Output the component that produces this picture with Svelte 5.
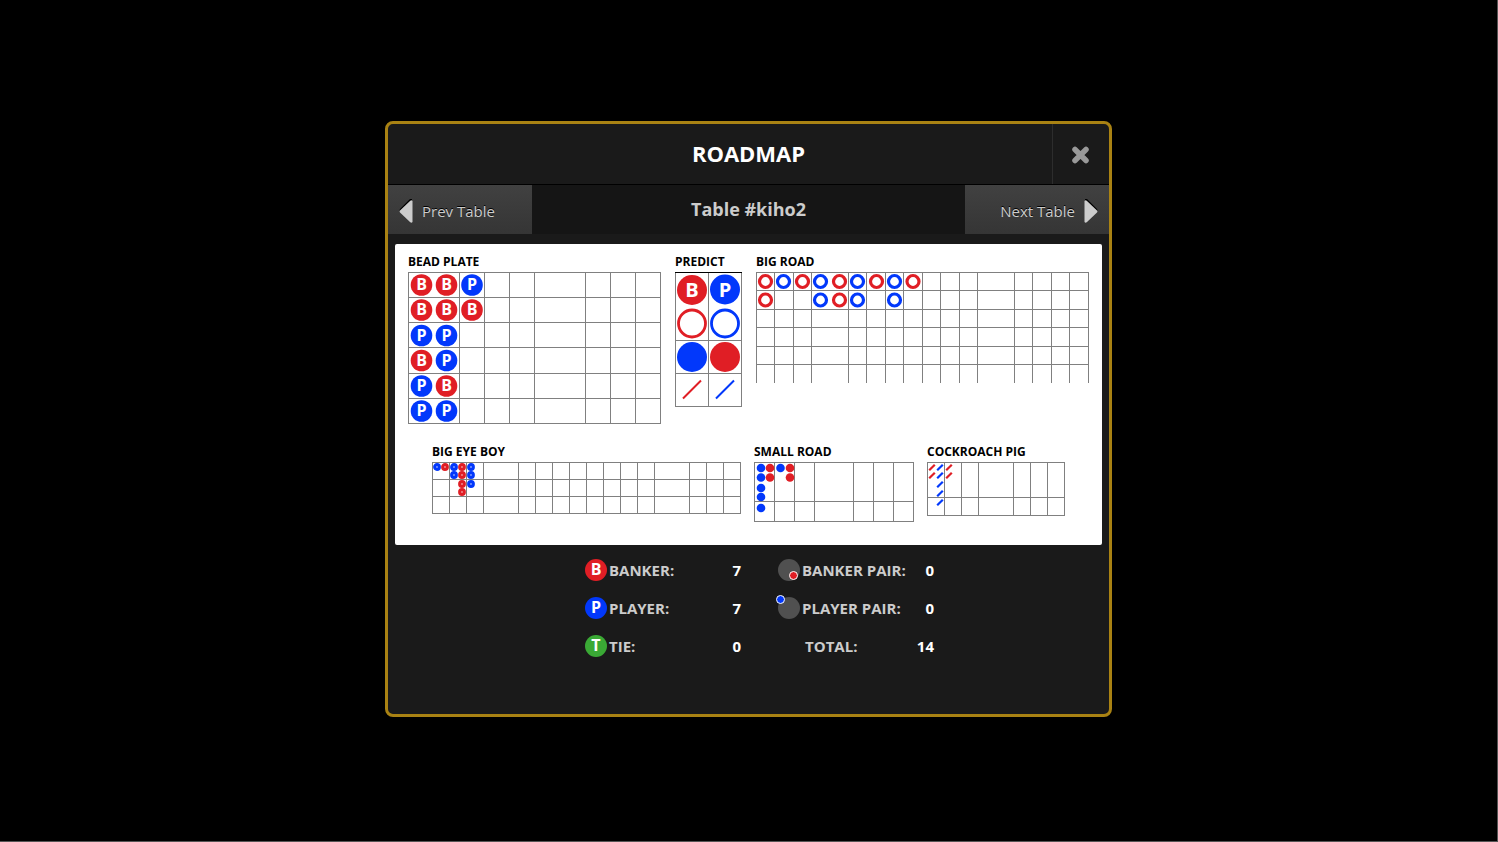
<script lang="ts">
	type Shape = 'bead' | 'ring' | 'dot' | 'slash';

	interface Mark {
		x: number;
		y: number;
		r: number;
		side: 'B' | 'P';
		shape: Shape;
		stroke?: number;
	}

	interface Road {
		name: string;
		width: number;
		height: number;
		cols: number[];
		rows: number[];
		marks: Mark[];
	}

	const RED = '#e01e25';
	const BLUE = '#0238fb';

	// each string is one column read downwards
	function plot(
		columns: string[],
		xs: number[],
		ys: number[],
		shape: Shape,
		r: number,
		stroke = 2
	): Mark[] {
		return columns.flatMap((column, c) =>
			[...column].map((side, i) => ({ x: xs[c], y: ys[i], r, side: side as 'B' | 'P', shape, stroke }))
		);
	}

	const beadPlate: Road = {
		name: 'BEAD PLATE',
		width: 253,
		height: 152,
		cols: [0, 51, 76, 101, 126, 177, 202, 227, 252],
		rows: [0, 25, 50, 75, 101, 126, 151],
		marks: plot(['BBPBPP', 'BBPPBP', 'PB'], [13.5, 38.5, 64], [13, 38, 63.5, 88.5, 114, 139], 'bead', 10.8)
	};

	const predict: Road = {
		name: 'PREDICT',
		width: 67,
		height: 135,
		cols: [0, 33, 66],
		rows: [0, 68, 101, 134],
		marks: [
			{ x: 17, y: 18, r: 15, side: 'B', shape: 'bead' },
			{ x: 50, y: 17.5, r: 15, side: 'P', shape: 'bead' },
			{ x: 17, y: 51.5, r: 13.5, side: 'B', shape: 'ring', stroke: 2.8 },
			{ x: 50, y: 51.5, r: 13.5, side: 'P', shape: 'ring', stroke: 2.8 },
			{ x: 17, y: 85, r: 15, side: 'P', shape: 'dot' },
			{ x: 50, y: 85, r: 15, side: 'B', shape: 'dot' },
			{ x: 17, y: 117.5, r: 9, side: 'B', shape: 'slash', stroke: 2 },
			{ x: 50, y: 117.5, r: 9, side: 'P', shape: 'slash', stroke: 2 }
		]
	};

	const bigRoad: Road = {
		name: 'BIG ROAD',
		width: 333,
		height: 111,
		cols: [0, 18, 37, 55, 92, 110, 129, 147, 166, 184, 203, 221, 258, 276, 295, 313, 332],
		rows: [0, 18, 37, 55, 74, 92],
		marks: plot(
			['BB', 'P', 'B', 'PP', 'BB', 'PP', 'B', 'PP', 'B'],
			[9.5, 27.5, 46.5, 64.5, 83.5, 101.5, 120.5, 138.5, 157],
			[9.5, 28],
			'ring',
			6,
			3.2
		)
	};

	const bigEyeBoy: Road = {
		name: 'BIG EYE BOY',
		width: 309,
		height: 52,
		cols: [0, 17, 34, 51, 86, 103, 120, 137, 154, 171, 188, 205, 222, 257, 274, 291, 308],
		rows: [0, 17, 34, 51],
		marks: plot(['P', 'B', 'PP', 'BBBB', 'PPP'], [5, 13, 22, 30, 39], [5, 13, 22, 30], 'ring', 2.3, 3.2)
	};

	const smallRoad: Road = {
		name: 'SMALL ROAD',
		width: 160,
		height: 60,
		cols: [0, 20, 40, 60, 99, 119, 139, 159],
		rows: [0, 39, 59],
		marks: plot(['PPPPP', 'BB', 'P', 'BB'], [7, 16, 26.5, 36], [6, 15.5, 26, 35, 46], 'dot', 4.3)
	};

	const cockroachPig: Road = {
		name: 'COCKROACH PIG',
		width: 138,
		height: 54,
		cols: [0, 17, 34, 51, 86, 103, 120, 137],
		rows: [0, 35, 53],
		marks: plot(['BB', 'PPPPP', 'BB'], [5, 13, 22], [5.5, 13.5, 22.5, 31.5, 40.5], 'slash', 2.8, 2.2)
	};

	const roadRows = [
		[beadPlate, predict, bigRoad],
		[bigEyeBoy, smallRoad, cockroachPig]
	];

	const results = [
		{ letter: 'B', kind: 'banker', label: 'BANKER:', value: 7 },
		{ letter: 'P', kind: 'player', label: 'PLAYER:', value: 7 },
		{ letter: 'T', kind: 'tie', label: 'TIE:', value: 0 }
	];

	const pairs = [
		{ kind: 'banker', label: 'BANKER PAIR:', value: 0 },
		{ kind: 'player', label: 'PLAYER PAIR:', value: 0 },
		{ kind: 'total', label: 'TOTAL:', value: 14 }
	];
</script>

{#snippet chart(road: Road)}
	<section class="road">
		<h3>{road.name}</h3>
		<svg width={road.width} height={road.height} viewBox="0 0 {road.width} {road.height}">
			{#each road.cols as x}
				<rect {x} y="0" width="1" height={road.height} class="line" />
			{/each}
			{#each road.rows as y, i}
				<rect
					x="0"
					{y}
					width={road.width}
					height="1"
					class="line"
					class:dark={road === predict && i === 0}
				/>
			{/each}
			{#each road.marks as m}
				{@const color = m.side === 'B' ? RED : BLUE}
				{#if m.shape === 'ring'}
					<circle cx={m.x} cy={m.y} r={m.r} fill="#fff" stroke={color} stroke-width={m.stroke} />
				{:else if m.shape === 'slash'}
					<line
						x1={m.x - m.r}
						y1={m.y + m.r}
						x2={m.x + m.r}
						y2={m.y - m.r}
						stroke={color}
						stroke-width={m.stroke}
					/>
				{:else}
					<circle cx={m.x} cy={m.y} r={m.r} fill={color} />
					{#if m.shape === 'bead'}
						<text x={m.x} y={m.y + (m.r > 12 ? 7 : 5)} class:large={m.r > 12}>{m.side}</text>
					{/if}
				{/if}
			{/each}
		</svg>
	</section>
{/snippet}

<main class="overlay">
	<div class="dialog" role="dialog" aria-labelledby="title">
		<header>
			<h1 id="title">ROADMAP</h1>
			<button class="close" aria-label="Close">
				<svg width="20" height="20" viewBox="0 0 20 20">
					<path d="M4 4.500L15 15.500M15 4.500L4 15.500" stroke="#999" stroke-width="5.500" stroke-linecap="round" />
				</svg>
			</button>
		</header>

		<nav>
			<button class="step">
				<svg width="14" height="26" viewBox="0 0 14 26">
					<path d="M13 1V22L1 13Q0 12 1 11L11 1Z" fill="#000" />
					<path d="M13.500 3V24Q12.500 25.500 11 24L1 14.500Q0 13.500 1 12.500L11 3Q12.500 1.500 13.500 3Z" fill="#ccc" />
				</svg>
				Prev Table
			</button>
			<h2>Table #kiho2</h2>
			<button class="step next">
				Next Table
				<svg width="14" height="26" viewBox="0 0 14 26">
					<path d="M1 1V22L13 13Q14 12 13 11L3 1Z" fill="#000" />
					<path d="M0.500 3V24Q1.500 25.500 3 24L13 14.500Q14 13.500 13 12.500L3 3Q1.500 1.500 0.500 3Z" fill="#ccc" />
				</svg>
			</button>
		</nav>

		<div class="panel">
			{#each roadRows as roads}
				<div class="roads">
					{#each roads as road}
						{@render chart(road)}
					{/each}
				</div>
			{/each}
		</div>

		<div class="stats">
			<dl>
				{#each results as item}
					<div class="stat">
						<span class="badge {item.kind}">{item.letter}</span>
						<dt>{item.label}</dt>
						<dd>{item.value}</dd>
					</div>
				{/each}
			</dl>
			<dl>
				{#each pairs as item}
					<div class="stat {item.kind}">
						{#if item.kind !== 'total'}
							<span class="pair {item.kind}"></span>
						{/if}
						<dt>{item.label}</dt>
						<dd>{item.value}</dd>
					</div>
				{/each}
			</dl>
		</div>
	</div>
</main>

<style>
	:global(body) {
		background: #000;
	}

	.overlay {
		box-sizing: border-box;
		min-height: 100vh;
		display: flex;
		align-items: center;
		justify-content: center;
		padding-bottom: 3px;
		border-right: 1px solid #555;
		border-bottom: 1px solid #555;
		font-family: 'Open Sans', 'Noto Sans', sans-serif;
	}

	.dialog {
		box-sizing: border-box;
		width: 100%;
		max-width: 727px;
		border: 3px solid #a98213;
		border-radius: 8px;
		background: #1a1a1a;
		overflow: hidden;
	}

	h1,
	h2,
	h3,
	dl,
	dd {
		margin: 0;
	}

	button {
		border: 0;
		cursor: pointer;
		font-family: inherit;
	}

	header {
		display: grid;
		grid-template-columns: 57px 1fr 57px;
		height: 60px;
		border-bottom: 1px solid #000;
	}

	h1 {
		grid-column: 2;
		color: #fff;
		font-size: 22px;
		line-height: 58px;
		text-align: center;
	}

	.close {
		display: flex;
		align-items: center;
		justify-content: center;
		padding: 2px 0 0;
		border-left: 1px solid #2d2d2d;
		background: none;
	}

	nav {
		display: flex;
		height: 49px;
		background: #151515;
	}

	h2 {
		flex: 1;
		color: #ccc;
		font-size: 18px;
		line-height: 49px;
		text-align: center;
	}

	.step {
		display: flex;
		align-items: center;
		gap: 9px;
		width: 144px;
		padding: 2px 11px 0;
		background: linear-gradient(#414141, #353535);
		color: #ccc;
		font-size: 15px;
		text-shadow: 0 -1px 0 #000;
	}

	.next {
		justify-content: flex-end;
	}

	.panel {
		display: flex;
		flex-direction: column;
		gap: 18px;
		margin: 10px 7px 0;
		padding: 8px 0 23px;
		border-radius: 2px;
		background: #fff;
	}

	.roads {
		display: flex;
		justify-content: center;
		gap: 14px;
	}

	.roads + .roads {
		gap: 13px;
	}

	.road svg {
		display: block;
	}

	h3 {
		color: #000;
		font-size: 12px;
		line-height: 20px;
		white-space: nowrap;
	}

	.line {
		fill: #808080;
	}

	.dark {
		fill: #000;
	}

	text {
		fill: #fff;
		font-size: 16px;
		font-weight: 700;
		text-anchor: middle;
	}

	.large {
		font-size: 20px;
	}

	.stats {
		display: flex;
		justify-content: center;
		gap: 37px;
		padding: 6px 0 49px 22px;
	}

	dl {
		width: 156px;
	}

	.stat {
		display: flex;
		align-items: center;
		height: 38px;
		font-size: 15px;
		font-weight: 700;
		white-space: nowrap;
	}

	dt {
		flex: 1;
		color: #ccc;
	}

	dd {
		color: #fff;
	}

	.total dt {
		padding-left: 27px;
	}

	.badge,
	.pair {
		flex: none;
		width: 22px;
		height: 22px;
		margin: 0 2px 1px 0;
		border-radius: 50%;
	}

	.badge {
		color: #fff;
		font-size: 16px;
		line-height: 20px;
		text-align: center;
	}

	.badge.banker {
		background: #e01e25;
	}

	.badge.player {
		background: #0238fb;
	}

	.badge.tie {
		background: #3aa935;
	}

	.pair {
		position: relative;
		background: #505050;
	}

	.pair::after {
		content: '';
		position: absolute;
		width: 7px;
		height: 7px;
		border: 1px solid #fff;
		border-radius: 50%;
	}

	.pair.banker::after {
		right: 2px;
		bottom: 1px;
		background: #e01e25;
	}

	.pair.player::after {
		top: -2px;
		left: -2px;
		background: #0238fb;
	}
</style>
